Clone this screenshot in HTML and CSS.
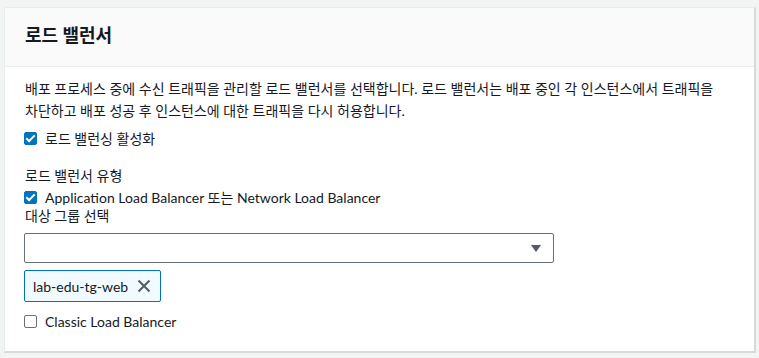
FILE: index.html
```html
<!DOCTYPE html>
<html lang="ko">

<head>
    <meta charset="UTF-8">
    <meta name="viewport" content="width=device-width, initial-scale=1.0">
    <title>로드 밸런서</title>
    <link rel="stylesheet" href="styles.css">
</head>

<body>
    <div class="card">
        <div class="card-header">
            <h2>로드 밸런서</h2>
        </div>

        <div class="card-body">
            <p class="desc">배포 프로세스 중에 수신 트래픽을 관리할 로드 밸런서를 선택합니다. 로드 밸런서는 배포 중인 각 인스턴스에서 트래픽을 차단하고 배포 성공 후 인스턴스에 대한 트래픽을 다시 허용합니다.</p>

            <label class="check first">
                <span class="box checked"></span>
                <span>로드 밸런싱 활성화</span>
            </label>

            <div class="group">
                <div class="label">로드 밸런서 유형</div>
                <label class="check">
                    <span class="box checked"></span>
                    <span>Application Load Balancer 또는 Network Load Balancer</span>
                </label>
                <div class="label small">대상 그룹 선택</div>

                <!-- 선택 박스 -->
                <div class="select">
                    <span class="arrow"></span>
                </div>

                <div class="token">
                    <span>lab-edu-tg-web</span>
                    <svg width="14" height="14" viewBox="0 0 14 14">
                        <path d="M1.5 1.5 L12.5 12.5 M12.5 1.5 L1.5 12.5" stroke="#545b64" stroke-width="2" fill="none" />
                    </svg>
                </div>

                <label class="check last">
                    <span class="box"></span>
                    <span>Classic Load Balancer</span>
                </label>
            </div>
        </div>
    </div>
</body>

</html>
```

FILE: styles.css
```css
/* Estilos generales */
* {
    box-sizing: border-box;
    margin: 0;
    padding: 0;
}

body {
    font-family: Lato, 'Noto Sans CJK KR', sans-serif;
    background-color: #f2f3f3;
    color: #16191f;
    font-size: 14px;
    padding: 7px 3px 0 4px;
}

/* Tarjeta */
.card {
    background-color: #fff;
    border: 1px solid #eaeded;
    border-right: 2px solid #d5dbdb;
    border-bottom: 2px solid #d5dbdb;
}

.card-header {
    background-color: #fafafa;
    border-bottom: 1px solid #eaeded;
    height: 59px;
    padding: 0 20px 6px 20px;
    display: flex;
    align-items: center;
}

.card-header h2 {
    font-size: 18px;
    font-weight: 700;
    color: #16191f;
}

.card-body {
    padding: 11px 19px 20px 19px;
}

.desc {
    line-height: 22px;
    max-width: 712px;
    word-break: keep-all;
    padding-left: 1px;
}

.check {
    display: flex;
    align-items: center;
    gap: 8px;
    height: 20px;
}

.check.first {
    margin-top: 6px;
}

.box {
    width: 13px;
    height: 13px;
    border: 1px solid #687078;
    border-radius: 2px;
    background-color: #fff;
    position: relative;
}

.box.checked {
    background-color: #0073bb;
    border-color: #0073bb;
}

.box.checked::after {
    content: '';
    position: absolute;
    left: 3px;
    top: 0px;
    width: 3px;
    height: 7px;
    border: solid #fff;
    border-width: 0 2px 2px 0;
    transform: rotate(45deg);
}

.group {
    margin-top: 18px;
}

.label {
    line-height: 20px;
    padding-left: 1px;
}

.group .check {
    margin-top: 1px;
}

.label.small {
    line-height: 16px;
    margin-top: 1px;
}

.select {
    width: 530px;
    height: 30px;
    border: 1px solid #687078;
    border-radius: 2px;
    margin-top: 9px;
    display: flex;
    justify-content: flex-end;
    align-items: center;
    padding-right: 12px;
}

.arrow {
    width: 0;
    height: 0;
    border-left: 5px solid transparent;
    border-right: 5px solid transparent;
    border-top: 7px solid #545b64;
}

.token {
    display: inline-flex;
    align-items: center;
    gap: 9px;
    height: 32px;
    margin-top: 7px;
    padding: 0 9px 0 8px;
    border: 1px solid #0073bb;
    border-radius: 2px;
    background-color: #f1faff;
}

.group .check.last {
    margin-top: 9px;
}
```
